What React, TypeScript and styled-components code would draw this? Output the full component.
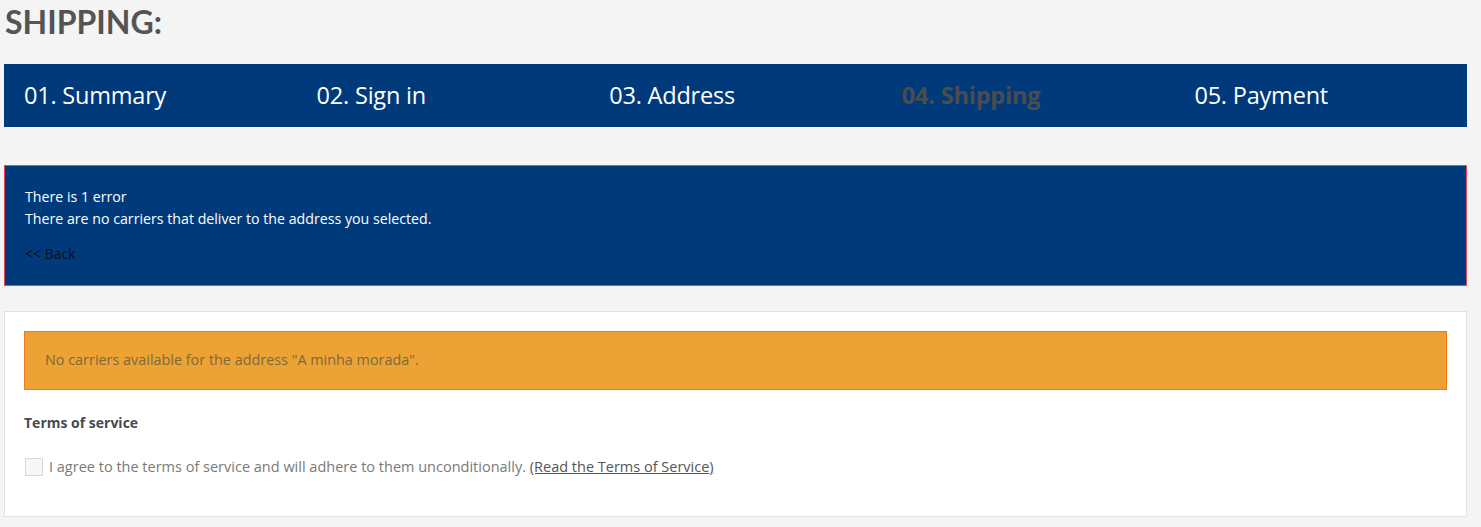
import React from 'react'
import styled, { createGlobalStyle } from 'styled-components'

const GlobalStyle = createGlobalStyle`
  html, body {
    margin: 0;
    padding: 0;
    background: #f4f4f4;
  }
  body {
    font-family: 'Open Sans', 'Noto Sans', sans-serif;
    color: #777;
  }
`

const steps = ['01. Summary', '02. Sign in', '03. Address', '04. Shipping', '05. Payment']
const current = 3

const Page = styled.div`
  padding: 0 14px 0 4px;
  display: flex;
  flex-direction: column;
`

const Title = styled.h1`
  margin: 0;
  padding: 0 0 0 1px;
  height: 64px;
  font-family: Lato, sans-serif;
  font-weight: 700;
  font-size: 32px;
  line-height: 44px;
  color: #555454;
  text-transform: uppercase;
`

const Steps = styled.ol`
  list-style: none;
  margin: 0 0 38px;
  padding: 0;
  display: grid;
  grid-template-columns: repeat(5, 1fr);
  height: 63px;
  background: #003a7b;
`

const Step = styled.li<{ $active: boolean }>`
  display: flex;
  align-items: center;
  padding: 0 0 1px 20px;
  font-family: 'Open Sans', sans-serif;
  font-size: 23.5px;
  font-weight: ${(p) => (p.$active ? 700 : 400)};
  color: ${(p) => (p.$active ? '#4c4c4c' : '#ffffff')};
  letter-spacing: -0.2px;
`

const ErrorBox = styled.div`
  border: 1px solid #e9465a;
  background: #003a7b;
  padding: 20px 20px 20px;
  margin-bottom: 25px;
  font-size: 14.2px;
  line-height: 22px;
  color: #fff;
  p {
    margin: 0;
  }
`

const BackLink = styled.a`
  display: inline-block;
  margin-top: 13px;
  color: #0b0f1a;
  text-decoration: none;
  font-size: 14px;
`

const Panel = styled.div`
  background: #fff;
  border: 1px solid #e2e2e2;
  padding: 19px 19px 38px;
`

const Warning = styled.p`
  margin: 0 0 22px;
  background: #eda236;
  border: 1px solid #e97c1e;
  padding: 18px 20px 19px;
  font-size: 14.4px;
  line-height: 20px;
  color: #7b6a38;
`

const Label = styled.p`
  margin: 0 0 22px;
  font-size: 14px;
  font-weight: 700;
  line-height: 22px;
  color: #4a4a4a;
`

const Agree = styled.label`
  display: flex;
  align-items: center;
  gap: 6px;
  padding-left: 1px;
  font-size: 14.5px;
  line-height: 22px;
  color: #7a7a7a;
`

const Check = styled.span`
  display: inline-block;
  width: 16px;
  height: 16px;
  border: 1px solid #d7d7d7;
  background: #f7f7f7;
`

const TermsLink = styled.a`
  color: #555;
  text-decoration: underline;
`

export default function App() {
  return (
    <>
      <GlobalStyle />
      <Page>
        <Title>Shipping:</Title>
        <Steps>
          {steps.map((s, i) => (
            <Step key={s} $active={i === current}>
              {s}
            </Step>
          ))}
        </Steps>
        <ErrorBox>
          <p>There is 1 error</p>
          <p>There are no carriers that deliver to the address you selected.</p>
          <BackLink href="#">&lt;&lt; Back</BackLink>
        </ErrorBox>
        <Panel>
          <Warning>No carriers available for the address "A minha morada".</Warning>
          <Label>Terms of service</Label>
          <Agree>
            <Check />
            <span>
              I agree to the terms of service and will adhere to them unconditionally.{' '}
              <TermsLink href="#">(Read the Terms of Service)</TermsLink>
            </span>
          </Agree>
        </Panel>
      </Page>
    </>
  )
}
